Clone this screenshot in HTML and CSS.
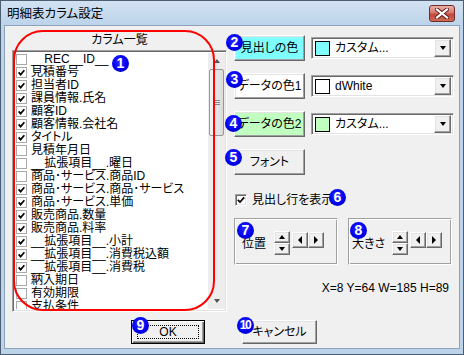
FILE: index.html
```html
<!DOCTYPE html>
<html lang="ja">
<head>
<meta charset="utf-8">
<title>明細表カラム設定</title>
<link rel="stylesheet" href="styles.css">
</head>
<body>
<div class="window">
  <div class="titlebar">
    <span class="title">明細表カラム設定</span>
    <div class="close">
      <svg width="14" height="11" viewBox="0 0 14 11"><path d="M2 1.5 L12 9.5 M12 1.5 L2 9.5" stroke="#5a1a16" stroke-width="4" stroke-linecap="square"/><path d="M2 1.5 L12 9.5 M12 1.5 L2 9.5" stroke="#fff" stroke-width="2.2" stroke-linecap="square"/></svg>
    </div>
  </div>
  <div class="client">
    <div class="leftcol">
      <div class="listlabel">カラム一覧</div>
      <div class="listbox sunken">
        <div class="items">
          <div class="row"><span class="cb"></span><span class="txt">__REC__ID__</span></div>
          <div class="row"><span class="cb"><svg class="ck" viewBox="0 0 7 7"><path d="M0.6 3.4 L2.6 5.6 L6.4 1.2"/></svg></span><span class="txt">見積番号</span></div>
          <div class="row"><span class="cb"><svg class="ck" viewBox="0 0 7 7"><path d="M0.6 3.4 L2.6 5.6 L6.4 1.2"/></svg></span><span class="txt">担当者ID</span></div>
          <div class="row"><span class="cb"><svg class="ck" viewBox="0 0 7 7"><path d="M0.6 3.4 L2.6 5.6 L6.4 1.2"/></svg></span><span class="txt">課員情報.氏名</span></div>
          <div class="row"><span class="cb"><svg class="ck" viewBox="0 0 7 7"><path d="M0.6 3.4 L2.6 5.6 L6.4 1.2"/></svg></span><span class="txt">顧客ID</span></div>
          <div class="row"><span class="cb"><svg class="ck" viewBox="0 0 7 7"><path d="M0.6 3.4 L2.6 5.6 L6.4 1.2"/></svg></span><span class="txt">顧客情報.会社名</span></div>
          <div class="row"><span class="cb"><svg class="ck" viewBox="0 0 7 7"><path d="M0.6 3.4 L2.6 5.6 L6.4 1.2"/></svg></span><span class="txt">タイトル</span></div>
          <div class="row"><span class="cb"></span><span class="txt">見積年月日</span></div>
          <div class="row"><span class="cb"></span><span class="txt">__拡張項目__.曜日</span></div>
          <div class="row"><span class="cb"></span><span class="txt">商品･サービス.商品ID</span></div>
          <div class="row"><span class="cb"><svg class="ck" viewBox="0 0 7 7"><path d="M0.6 3.4 L2.6 5.6 L6.4 1.2"/></svg></span><span class="txt">商品･サービス.商品･サービス</span></div>
          <div class="row"><span class="cb"><svg class="ck" viewBox="0 0 7 7"><path d="M0.6 3.4 L2.6 5.6 L6.4 1.2"/></svg></span><span class="txt">商品･サービス.単価</span></div>
          <div class="row"><span class="cb"><svg class="ck" viewBox="0 0 7 7"><path d="M0.6 3.4 L2.6 5.6 L6.4 1.2"/></svg></span><span class="txt">販売商品.数量</span></div>
          <div class="row"><span class="cb"><svg class="ck" viewBox="0 0 7 7"><path d="M0.6 3.4 L2.6 5.6 L6.4 1.2"/></svg></span><span class="txt">販売商品.料率</span></div>
          <div class="row"><span class="cb"><svg class="ck" viewBox="0 0 7 7"><path d="M0.6 3.4 L2.6 5.6 L6.4 1.2"/></svg></span><span class="txt">__拡張項目__.小計</span></div>
          <div class="row"><span class="cb"><svg class="ck" viewBox="0 0 7 7"><path d="M0.6 3.4 L2.6 5.6 L6.4 1.2"/></svg></span><span class="txt">__拡張項目__.消費税込額</span></div>
          <div class="row"><span class="cb"><svg class="ck" viewBox="0 0 7 7"><path d="M0.6 3.4 L2.6 5.6 L6.4 1.2"/></svg></span><span class="txt">__拡張項目__.消費税</span></div>
          <div class="row"><span class="cb"></span><span class="txt">納入期日</span></div>
          <div class="row"><span class="cb"></span><span class="txt">有効期限</span></div>
          <div class="row"><span class="cb"></span><span class="txt">支払条件</span></div>
        </div>
        <div class="vscroll">
          <div class="sbtn"><span class="tri-up"></span></div>
          <div class="thumb"><span class="grip"></span></div>
          <div class="track"></div>
          <div class="sbtn"><span class="tri-down"></span></div>
        </div>
      </div>
      <div class="btn raised default ok"><span class="focus">OK</span></div>
    </div>
    <div class="rightcol">
      <div class="colorrow">
        <div class="btn raised cbtn cyan">見出しの色</div>
        <div class="combo sunken"><span class="swatch sw-cyan"></span><span class="ctext">カスタム...</span><span class="dd raised"><span class="tri-down dark"></span></span></div>
      </div>
      <div class="colorrow">
        <div class="btn raised cbtn white">データの色1</div>
        <div class="combo sunken"><span class="swatch sw-white"></span><span class="ctext">dWhite</span><span class="dd raised"><span class="tri-down dark"></span></span></div>
      </div>
      <div class="colorrow">
        <div class="btn raised cbtn green">データの色2</div>
        <div class="combo sunken"><span class="swatch sw-green"></span><span class="ctext">カスタム...</span><span class="dd raised"><span class="tri-down dark"></span></span></div>
      </div>
      <div class="btn raised cbtn fontbtn">フォント</div>
      <div class="chkrow">
        <span class="bigcb sunken"><svg width="8" height="8" viewBox="0 0 8 8"><path d="M0.8 3.8 L3 6 L7.2 1.4" fill="none" stroke="#000" stroke-width="1.7"/></svg></span>
        <span class="chklabel">見出し行を表示</span>
      </div>
      <div class="groups">
        <div class="group g1">
          <span class="glabel">位置</span>
          <div class="spin"><span class="abtn raised"><span class="tri-up dark"></span></span><span class="abtn raised"><span class="tri-down dark"></span></span></div>
          <div class="lr"><span class="lbtn raised"><span class="tri-left"></span></span><span class="lbtn raised"><span class="tri-right"></span></span></div>
        </div>
        <div class="group g2">
          <span class="glabel">大きさ</span>
          <div class="spin"><span class="abtn raised"><span class="tri-up dark"></span></span><span class="abtn raised"><span class="tri-down dark"></span></span></div>
          <div class="lr"><span class="lbtn raised"><span class="tri-left"></span></span><span class="lbtn raised"><span class="tri-right"></span></span></div>
        </div>
      </div>
      <div class="coords">X=8 Y=64 W=185 H=89</div>
      <div class="btn raised cancel">キャンセル</div>
    </div>
  </div>
  <div class="redbox"></div>
  <span class="num n1">1</span>
  <span class="num n2">2</span>
  <span class="num n3">3</span>
  <span class="num n4">4</span>
  <span class="num n5">5</span>
  <span class="num n6">6</span>
  <span class="num n7">7</span>
  <span class="num n8">8</span>
  <span class="num n9">9</span>
  <span class="num n10">10</span>
</div>
</body>
</html>
```

FILE: styles.css
```css
* { box-sizing: border-box; }
html, body { margin: 0; padding: 0; }
body {
  width: 464px;
  height: 355px;
  overflow: hidden;
  background: #fff;
  font-family: "Liberation Sans", "Noto Sans CJK JP", sans-serif;
  font-feature-settings: "palt";
  font-size: 12px;
  color: #000;
}
.window {
  position: relative;
  width: 464px;
  height: 355px;
  border: 1px solid #4d5e73;
  background: #bcd3ea;
  display: flex;
  flex-direction: column;
}
.titlebar {
  height: 24px;
  flex: none;
  display: flex;
  align-items: flex-start;
  padding: 0 8px 0 6px;
  background: linear-gradient(#d3e2f2, #bcd3ea);
}
.title {
  font-size: 12.5px;
  line-height: 14px;
  margin-top: 6px;
  color: #000;
}
.close {
  margin-left: auto;
  margin-top: 4px;
  width: 26px;
  height: 17px;
  border: 1px solid #6e2d29;
  border-radius: 3px;
  background: linear-gradient(#eab1a8 0%, #d7786e 45%, #c4463a 55%, #cf6a55 100%);
  display: flex;
  align-items: center;
  justify-content: center;
}
.client {
  flex: 1;
  margin: 0 3px 5px 3px;
  border: 1px solid #8da2bb;
  background: #f0f0f0;
  display: flex;
}
.leftcol {
  width: 222px;
  padding: 7px 0 0 7px;
  display: flex;
  flex-direction: column;
}
.listlabel {
  height: 15px;
  line-height: 15px;
  text-align: center;
  width: 215px;
}
.sunken {
  border: 1px solid;
  border-color: #a0a0a0 #ffffff #ffffff #a0a0a0;
  box-shadow: inset 1px 1px #696969, inset -1px -1px #e3e3e3;
  background: #fff;
}
.raised {
  border: 1px solid;
  border-color: #ffffff #696969 #696969 #ffffff;
  box-shadow: inset -1px -1px #a0a0a0, inset 1px 1px #e3e3e3;
  background: #f0f0f0;
}
.listbox {
  margin-top: 2px;
  width: 215px;
  height: 262px;
  padding: 2px 1px 2px 2px;
  display: flex;
}
.items {
  flex: 1;
  overflow: hidden;
}
.row {
  height: 13px;
  display: flex;
  align-items: center;
  white-space: nowrap;
}
.cb {
  width: 11px;
  height: 11px;
  margin-left: 1px;
  border: 1px solid #a9a9a9;
  background: #fff;
  flex: none;
  display: flex;
  align-items: center;
  justify-content: center;
}
.ck {
  width: 7px;
  height: 7px;
  fill: none;
  stroke: #000;
  stroke-width: 1.7;
}
.txt {
  margin-left: 4px;
  line-height: 13px;
  font-size: 12px;
}
.vscroll {
  width: 17px;
  flex: none;
  display: flex;
  flex-direction: column;
  background: #ededed;
}
.sbtn {
  height: 16px;
  flex: none;
  display: flex;
  align-items: center;
  justify-content: center;
}
.thumb {
  height: 67px;
  margin: 0 1px;
  border: 1px solid #979797;
  border-radius: 2px;
  background: linear-gradient(90deg, #f2f2f2, #dadada);
  display: flex;
  align-items: center;
  justify-content: center;
}
.grip {
  width: 7px;
  height: 5px;
  border-top: 1px solid #888;
  border-bottom: 1px solid #888;
  position: relative;
}
.grip::after {
  content: "";
  position: absolute;
  left: 0;
  right: 0;
  top: 1px;
  border-top: 1px solid #888;
}
.track { flex: 1; }
.tri-up, .tri-down {
  width: 0;
  height: 0;
  border-left: 3.5px solid transparent;
  border-right: 3.5px solid transparent;
}
.tri-up { border-bottom: 4px solid #555; }
.tri-down { border-top: 4px solid #555; }
.tri-up.dark { border-bottom-color: #000; }
.tri-down.dark { border-top-color: #000; }
.tri-left, .tri-right {
  width: 0;
  height: 0;
  border-top: 4px solid transparent;
  border-bottom: 4px solid transparent;
}
.tri-left { border-right: 4px solid #000; }
.tri-right { border-left: 4px solid #000; }
.btn {
  display: flex;
  align-items: center;
  justify-content: center;
  font-size: 12px;
  line-height: 14px;
  white-space: nowrap;
}
.ok {
  margin-top: 8px;
  margin-left: 119px;
  width: 74px;
  height: 24px;
  border-color: #000;
  box-shadow: inset 1px 1px #fff, inset -1px -1px #696969, inset -2px -2px #a0a0a0;
  padding: 4px 5px;
}
.focus {
  flex: 1;
  align-self: stretch;
  border: 1px dotted #000;
  display: flex;
  align-items: center;
  justify-content: center;
}
.rightcol {
  padding: 9px 0 0 7px;
  display: flex;
  flex-direction: column;
  width: 232px;
}
.colorrow {
  display: flex;
  align-items: center;
  height: 26px;
  margin-bottom: 12px;
}
.cbtn {
  width: 71px;
  height: 26px;
  flex: none;
}
.cyan { background: #80ffff; }
.white { background: #ffffff; }
.green { background: #c0ffc0; }
.combo {
  margin-left: 6px;
  width: 143px;
  height: 22px;
  display: flex;
  align-items: center;
  padding: 2px 2px 2px 3px;
}
.swatch {
  width: 15px;
  height: 15px;
  border: 1px solid #000;
  flex: none;
}
.sw-cyan { background: #80ffff; }
.sw-white { background: #fff; }
.sw-green { background: #c0ffc0; }
.ctext {
  margin-left: 5px;
  flex: 1;
  font-size: 12px;
  line-height: 14px;
}
.dd {
  width: 17px;
  height: 18px;
  flex: none;
  display: flex;
  align-items: center;
  justify-content: center;
}
.fontbtn { height: 26px; }
.chkrow {
  margin-top: 18px;
  height: 14px;
  display: flex;
  align-items: center;
  padding-left: 1px;
}
.bigcb {
  width: 12px;
  height: 12px;
  display: flex;
  align-items: center;
  justify-content: center;
  flex: none;
}
.chklabel {
  margin-left: 5px;
  line-height: 14px;
}
.groups {
  margin-top: 11px;
  display: flex;
  gap: 10px;
}
.group {
  width: 104px;
  height: 47px;
  border: 1px solid;
  border-color: #a0a0a0 #fff #fff #a0a0a0;
  box-shadow: inset 1px 1px #fff, inset -1px -1px #a0a0a0;
  display: flex;
  align-items: flex-start;
  padding-top: 12px;
}
.g1 { padding-left: 7px; }
.g2 { padding-left: 3px; }
.glabel {
  margin-top: 6px;
  line-height: 14px;
}
.g1 .glabel { width: 32px; }
.g2 .glabel { width: 40px; }
.spin {
  display: flex;
  flex-direction: column;
}
.abtn {
  width: 16px;
  height: 12px;
  display: flex;
  align-items: center;
  justify-content: center;
}
.lr {
  display: flex;
  margin-top: 1px;
  margin-left: 2px;
}
.lbtn {
  width: 16px;
  height: 16px;
  display: flex;
  align-items: center;
  justify-content: center;
}
.coords {
  margin-top: 16px;
  line-height: 14px;
  text-align: right;
  width: 215px;
  font-size: 12px;
}
.cancel {
  margin-top: 25px;
  margin-left: 8px;
  width: 75px;
  height: 24px;
}
.redbox {
  position: absolute;
  left: 12px;
  top: 29px;
  width: 202px;
  height: 281px;
  border: 2px solid #f00;
  border-radius: 30px;
  pointer-events: none;
}
.num {
  position: absolute;
  width: 17px;
  height: 17px;
  border-radius: 50%;
  background: radial-gradient(circle at 45% 40%, #2b2bff 0%, #0000f0 55%, #00008c 100%);
  color: #fff;
  font-family: "Liberation Sans", sans-serif;
  font-weight: bold;
  font-size: 14px;
  line-height: 17px;
  text-align: center;
}
.n1 { left: 111px; top: 54px; }
.n2 { left: 225px; top: 33px; }
.n3 { left: 225px; top: 70px; }
.n4 { left: 224px; top: 114px; }
.n5 { left: 224px; top: 148px; }
.n6 { left: 328px; top: 188px; }
.n7 { left: 236px; top: 221px; }
.n8 { left: 349px; top: 221px; }
.n9 { left: 131px; top: 316px; }
.n10 { left: 236px; top: 316px; font-size: 12px; letter-spacing: -1.5px; text-indent: -1px; }
```
